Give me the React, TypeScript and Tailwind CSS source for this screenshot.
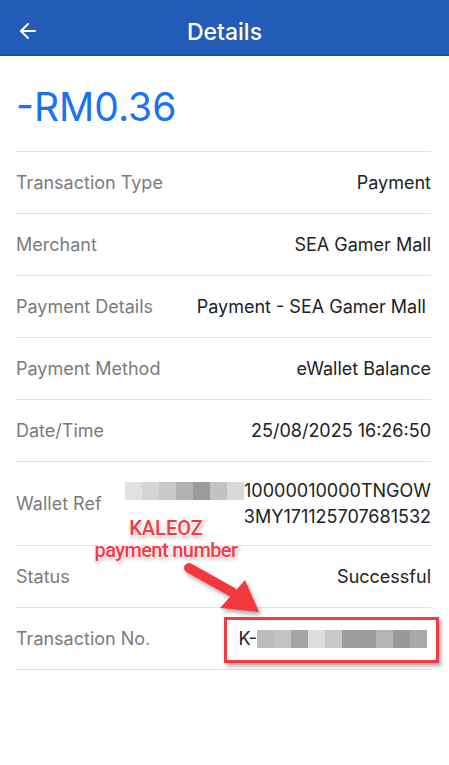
import { ArrowLeft } from "lucide-react";

const rows: { label: string; value: string }[] = [
  { label: "Transaction Type", value: "Payment" },
  { label: "Merchant", value: "SEA Gamer Mall" },
  { label: "Payment Details", value: "Payment - SEA Gamer Mall\u00a0" },
  { label: "Payment Method", value: "eWallet Balance" },
  { label: "Date/Time", value: "25/08/2025 16:26:50" },
];

const walletBlocks = ["#e2e2e2", "#d5d5d5", "#c9c9c9", "#b2b2b2", "#9b9b9b", "#c2c2c2", "#d9d9d9"];
const txnBlocks = ["#bcbcbc", "#c3c3c3", "#a5a5a5", "#dedede", "#c9c9c9", "#9e9e9e", "#9b9b9b", "#b5b5b5", "#9a9a9a", "#a8a8a8"];

function Row({ label, children, tall }: { label: string; children: React.ReactNode; tall?: boolean }) {
  return (
    <div
      className={[
        "flex items-center justify-between border-b border-[#e2e2e2]",
        tall ? "h-[84px]" : "h-[62px]",
      ].join(" ")}
    >
      <span className="text-[18px] text-[#7b7b7b]">{label}</span>
      <div className="text-right text-[18px] text-[#222222]">{children}</div>
    </div>
  );
}

export default function App() {
  return (
    <div
      className="relative h-[765px] w-[449px] overflow-hidden bg-white"
      style={{ fontFamily: "Inter, 'Liberation Sans', sans-serif" }}
    >
      {/* header */}
      <div className="relative flex h-[56px] items-center justify-center border-b-2 border-[#1d4e9f] bg-[#235cb7] pt-[10px]">
        <ArrowLeft className="absolute left-[16px] top-[19px] text-white" size={24} strokeWidth={2} />
        <span className="text-[23px] font-medium text-white">Details</span>
      </div>

      <div className="ml-4 mr-[18px]">
        <div className="mt-[27px] mb-[20px] text-[39px] leading-[48px] text-[#1973f3]">-RM0.36</div>

        <div className="border-t border-[#e2e2e2]">
          {rows.map((r) => (
            <Row key={r.label} label={r.label}>
              {r.value}
            </Row>
          ))}

          <Row label="Wallet Ref" tall>
            <div className="flex items-center justify-end leading-[26px]">
              <div className="flex h-[18px]">
                {walletBlocks.map((c, i) => (
                  <div key={i} className="h-[18px] w-[17px]" style={{ backgroundColor: c }} />
                ))}
              </div>
              <span>10000010000TNGOW</span>
            </div>
            <div className="leading-[26px]">3MY171125707681532</div>
          </Row>

          <Row label="Status">Successful</Row>

          <Row label="Transaction No.">
            <div className="flex items-center pr-[4px]">
              <span>K-</span>
              <div className="flex h-[18px]">
                {txnBlocks.map((c, i) => (
                  <div key={i} className="h-[18px] w-[17px]" style={{ backgroundColor: c }} />
                ))}
              </div>
            </div>
          </Row>
        </div>
      </div>

      {/* annotation overlay */}
      <div
        className="absolute left-[66px] top-[517px] w-[200px] text-center text-[20px] leading-[22px] font-medium text-[#f23b3f] [text-shadow:0_0_2px_#fff,0_0_2px_#fff,0_0_3px_#fff,1px_2px_4px_rgba(0,0,0,0.4)]"
        style={{ fontFamily: "Roboto, 'Liberation Sans', sans-serif" }}
      >
        <div>KALEOZ</div>
        <div className="tracking-[-0.6px]">payment number</div>
      </div>

      <svg className="absolute left-0 top-0" width="449" height="765" viewBox="0 0 449 765">
        <defs>
          <filter id="sh" x="-20%" y="-20%" width="140%" height="140%">
            <feDropShadow dx="2" dy="3" stdDeviation="2" floodColor="#000" floodOpacity="0.35" />
          </filter>
        </defs>
        <g filter="url(#sh)" fill="#f0393e">
          <line x1="189" y1="568" x2="232" y2="592" stroke="#f0393e" strokeWidth="10" strokeLinecap="round" />
          <polygon points="259,612 220,608 245,580" />
        </g>
      </svg>

      <div className="absolute left-[224px] top-[617px] h-[46px] w-[215px] border-[3px] border-[#f03c42] shadow-[2px_3px_4px_rgba(0,0,0,0.35)]" />
    </div>
  );
}
